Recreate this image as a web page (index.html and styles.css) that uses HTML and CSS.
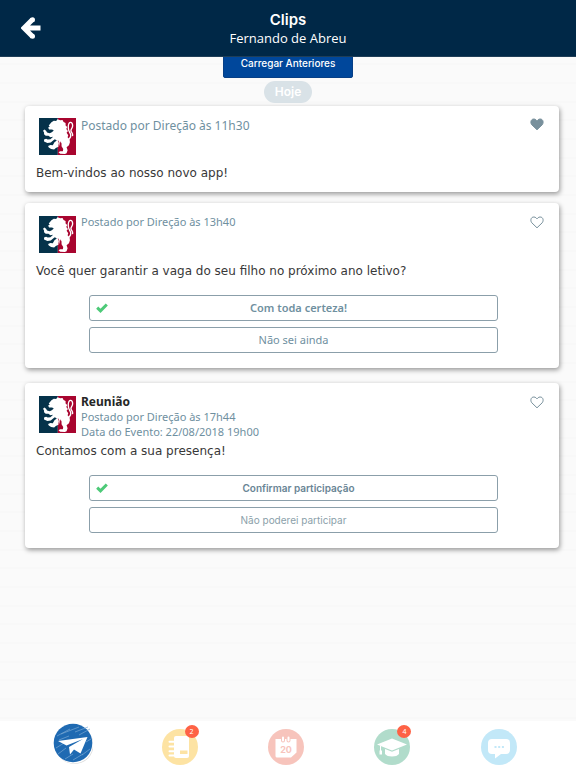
FILE: index.html
```html
<!DOCTYPE html>
<html lang="pt-BR">
<head>
<meta charset="utf-8">
<meta name="viewport" content="width=device-width, initial-scale=1">
<title>Clips</title>
<link rel="stylesheet" href="styles.css">
</head>
<body>
<svg class="defs" aria-hidden="true">
  <symbol id="crest" viewBox="0 0 110 110">
    <path fill="#05324a" d="M0 0h56v110H0z"/>
    <path fill="#a8052f" d="M56 0h54v110H56z"/>
    <path fill="#fff" d="M37 13l7-5 7 1 4-5 8 3 7-1 3 6 6 3 0 7 5 5-3 6 5 6-4 5 5 7-2 6 6 7 1 8-3 9-7 6 3 9-3 9-5 2-14-1-5-4 5-3 8 0 1-7-5-8 0-8-3-7-2 8-3 8-9 4-5 5-9-2-7-4-2-5 7-3 7 1 5-9 7-5-6-4-5 4-7 6-10 1-10-4 0-6 6-2 5 2 8-1 8-7-8 1-6-4-8 0-5-5 0-5-3-5 4-4 5 4 3 5 8 2 6-3 6-5-5-3-9 0-3-6 5-2-3-4z"/>
    <path fill="none" stroke="#fff" stroke-width="4" stroke-linecap="round" d="M85 66c7-5 12-12 8-20-3-6-6-9-6-18 0-8 2-14 6-15s7 4 7 10c0 8-6 9-5 15s6 7 5 14"/>
    <path fill="none" stroke="#a8052f" stroke-width="2" d="M57 67l3 8-2 8 5 8"/>
  </symbol>
  <symbol id="heart" viewBox="0 0 14 13">
    <path d="M7 11.8L1.9 6.9C.2 5.100.5 1 3.900 1 5.600 1 6.400 2.200 7 3c.6-.8 1.400-2 3.100-2 3.400 0 3.700 4.100 2 5.900z"/>
  </symbol>
  <symbol id="check" viewBox="0 0 12 10">
    <path fill="none" stroke="#4dca78" stroke-width="3" d="M1.200 4.600l3.300 3.200L10.800 1.500"/>
  </symbol>
</svg>

<header class="topbar">
  <button class="back" type="button" aria-label="Voltar">
    <svg viewBox="0 0 20 22" width="20" height="22"><path d="M19.500 11H4M11.500 2.500L3 11l8.500 8.500" fill="none" stroke="#fff" stroke-width="5"/><circle cx="11.500" cy="2.800" r="2.500" fill="#fff"/><circle cx="11.500" cy="19.200" r="2.500" fill="#fff"/></svg>
  </button>
  <div class="heading">
    <h1>Clips</h1>
    <p>Fernando de Abreu</p>
  </div>
</header>

<main class="feed">
  <button class="load" type="button">Carregar Anteriores</button>
  <span class="day">Hoje</span>

  <article class="card">
    <div class="card-head">
      <svg class="crest"><use href="#crest"/></svg>
      <div class="meta wide"><p>Postado por Direção às 11h30</p></div>
      <button class="like on" type="button" aria-label="Curtir"><svg width="14" height="13"><use href="#heart"/></svg></button>
    </div>
    <p class="message">Bem-vindos ao nosso novo app!</p>
  </article>

  <article class="card">
    <div class="card-head">
      <svg class="crest"><use href="#crest"/></svg>
      <div class="meta"><p>Postado por Direção às 13h40</p></div>
      <button class="like" type="button" aria-label="Curtir"><svg width="14" height="13"><use href="#heart"/></svg></button>
    </div>
    <p class="message">Você quer garantir a vaga do seu filho no próximo ano letivo?</p>
    <div class="options">
      <button class="option chosen" type="button"><svg class="tick" width="12" height="10"><use href="#check"/></svg>Com toda certeza!</button>
      <button class="option" type="button">Não sei ainda</button>
    </div>
  </article>

  <article class="card event">
    <div class="card-head">
      <svg class="crest"><use href="#crest"/></svg>
      <div class="meta"><h2>Reunião</h2><p>Postado por Direção às 17h44</p><p>Data do Evento: 22/08/2018 19h00</p></div>
      <button class="like" type="button" aria-label="Curtir"><svg width="14" height="13"><use href="#heart"/></svg></button>
    </div>
    <p class="message">Contamos com a sua presença!</p>
    <div class="options rsvp">
      <button class="option chosen" type="button"><svg class="tick" width="12" height="10"><use href="#check"/></svg>Confirmar participação</button>
      <button class="option" type="button">Não poderei participar</button>
    </div>
  </article>
</main>

<nav class="tabs">
  <a class="tab active" href="#clips" aria-label="Clips">
    <svg viewBox="0 0 40 42" width="40" height="42">
      <circle cx="21.500" cy="22" r="19" fill="#d8d8d8"/>
      <circle cx="21" cy="21.500" r="19" fill="#fff"/>
      <circle cx="20" cy="20" r="19.300" fill="#1f6ab2"/>
      <g stroke="#79a7d3" stroke-width=".7" fill="none"><path d="M4 13L17 6M8 11l18-7M3 25l8-5M5 31l8-6M22 9l13-5M26 12l11-6M29 32l8-6M12 36l8-5M20 37l10-6M33 19l5-3M6 17l10-4"/></g>
      <path fill="#fff" d="M34.500 14L5 18l8.500 4.500L30 16 16 24l1 7.500 4-5 6.500 4z"/>
    </svg>
  </a>
  <a class="tab" href="#agenda" aria-label="Agenda">
    <svg viewBox="0 0 36 36" width="36" height="36">
      <circle cx="18" cy="18" r="18" fill="#fde3a3"/>
      <path fill="#fff" d="M14 7h11q2 0 2 2v18q0 2-2 2H14q-2 0-2-2V9q0-2 2-2z"/>
      <path d="M7.500 12.800h5M7.500 17.500h5M7.500 22.200h5M7.500 26.500h5" stroke="#fff" stroke-width="2" stroke-linecap="round" fill="none"/>
      <path fill="#fde3a3" d="M18 21.500h7.500v3.500H18z"/>
    </svg>
    <span class="badge">2</span>
  </a>
  <a class="tab" href="#calendario" aria-label="Calendário">
    <svg viewBox="0 0 36 36" width="36" height="36">
      <circle cx="18" cy="18" r="18" fill="#f7c4bc"/>
      <path fill="#fff" d="M7.500 10h21v13.500L23 28.500H9q-1.500 0-1.500-1.500z"/>
      <path d="M15 8.500v3M20.500 8.500v3" stroke="#f7c4bc" stroke-width="4" stroke-linecap="round"/>
      <path d="M15 8.500v3M20.500 8.500v3" stroke="#fff" stroke-width="2" stroke-linecap="round"/>
      <text class="date" x="18" y="24" text-anchor="middle">20</text>
    </svg>
  </a>
  <a class="tab" href="#escola" aria-label="Escola">
    <svg viewBox="0 0 36 36" width="36" height="36">
      <circle cx="18" cy="18" r="18" fill="#b1dccb"/>
      <path fill="#fff" d="M18 9.500l15 6-15 6-15-6zM11 20l7 2.800 7-2.800v5q-2 2.500-7 2.500t-7-2.500z"/>
      <path d="M6.500 17v6" stroke="#fff"/><path fill="#fff" d="M5.500 21.500h2.500v4H5.500z"/>
    </svg>
    <span class="badge">4</span>
  </a>
  <a class="tab" href="#mensagens" aria-label="Mensagens">
    <svg viewBox="0 0 36 36" width="36" height="36">
      <circle cx="18" cy="18" r="18" fill="#c2e8f8"/>
      <path fill="#fff" d="M11 10h14q4 0 4 4v7q0 4-4 4h-5l-6 4.500V25h-3q-4 0-4-4v-7q0-4 4-4z"/>
      <path fill="#c2e8f8" d="M13.500 17h2v2h-2zM17.200 17h2v2h-2zM20.900 17h2v2h-2z"/>
    </svg>
  </a>
</nav>
</body>
</html>
```
FILE: styles.css
```css
* {
  box-sizing: border-box;
}

body {
  margin: 0;
  min-height: 100vh;
  display: flex;
  flex-direction: column;
  font-family: "Noto Sans", "Open Sans", sans-serif;
  color: #383838;
  background: #fafafa repeating-linear-gradient(#fafafa 0 7px, #f6f6f6 8px, #fafafa 9px 26px, #f6f6f6 27px, #fafafa 28px 45px, #f6f6f6 46px, #fafafa 47px 56px);
}

h1, h2, p {
  margin: 0;
}

button {
  font: inherit;
  cursor: pointer;
}

.defs {
  display: none;
}

.topbar {
  position: sticky;
  top: 0;
  z-index: 2;
  display: grid;
  grid-template-columns: 60px 1fr 60px;
  align-items: center;
  height: 57px;
  border-bottom: 1px solid #1f3e57;
  background: #002847;
  color: #fff;
  text-align: center;
}

.back {
  display: flex;
  width: 60px;
  padding: 0 0 0 21px;
  border: 0;
  background: none;
}

.heading {
  padding-top: 2px;
}

.heading h1 {
  font: 600 15px/18px Inter, sans-serif;
}

.heading p {
  font: 400 13px/18px "Open Sans", sans-serif;
}

.feed {
  flex: 1;
  display: flex;
  flex-direction: column;
  align-items: center;
  padding: 0 17px 20px 25px;
}

.load {
  height: 30px;
  margin-top: -9px;
  margin-right: 8px;
  padding: 0 17px;
  border: 1px solid #073f86;
  border-radius: 2px;
  background: #00479b;
  color: #fff;
  font: 500 10px/18px Inter, sans-serif;
}

.day {
  margin: 3px 8px 3px 0;
  padding: 0 11px;
  border-radius: 11px;
  background: #d9e2e7;
  color: #fff;
  font: 600 12px/22px Inter, sans-serif;
}

.card {
  width: 100%;
  margin-bottom: 11px;
  padding: 12px 11px 9px;
  border-radius: 4px;
  background: #fff;
  box-shadow: 1px 2px 5px rgba(0, 0, 0, 0.4);
}

.card:has(.options) {
  padding: 13px 11px 15px;
}

.event {
  margin-top: 4px;
}

.card-head {
  display: grid;
  grid-template-columns: 37px 1fr auto;
  column-gap: 5px;
  height: 37px;
  padding: 0 4px 0 3px;
}

.crest {
  width: 37px;
  height: 37px;
}

.meta {
  margin-top: -2px;
  color: #6f909f;
  font-size: 11px;
  line-height: 15px;
}

.wide {
  margin-top: 0;
  font-size: 12px;
}

.meta h2 {
  color: #262626;
  font-size: 12px;
  line-height: 15px;
}

.like {
  align-self: start;
  display: flex;
  padding: 0;
  border: 0;
  background: none;
  fill: none;
  stroke: #78909c;
}

.on {
  fill: #78909c;
}

.message {
  margin-top: 8px;
  font: 12px/20px "DejaVu Sans", sans-serif;
}

.options {
  display: grid;
  gap: 6px;
  margin: 14px 50px 0 53px;
}

.option {
  position: relative;
  height: 26px;
  padding: 0 12px;
  border: 1px solid #8b9faa;
  border-radius: 3px;
  background: #fff;
  color: #6f909f;
  font-size: 11px;
  line-height: 24px;
}

.chosen {
  padding-left: 22px;
  font-weight: 600;
}

.rsvp .option {
  color: #8b9faa;
  font-family: Inter, sans-serif;
  font-size: 10px;
}

.rsvp .chosen {
  color: #698595;
}

.tick {
  position: absolute;
  left: 6px;
  top: 7px;
}

.tabs {
  position: sticky;
  bottom: 0;
  display: grid;
  grid-template-columns: repeat(5, 1fr);
  height: 47px;
  padding: 0 24px 0 20px;
  background: #fff;
}

.tab {
  position: relative;
  justify-self: center;
  padding-top: 8px;
  text-decoration: none;
}

.active {
  padding-top: 2px;
}

.tab svg {
  display: block;
}

.date {
  fill: #f7c4bc;
  font: 700 9px Inter, sans-serif;
}

.badge {
  position: absolute;
  top: 4px;
  right: -1px;
  width: 14px;
  border-radius: 50%;
  background: #fe6245;
  color: #fff;
  font: 7px/13px "Noto Sans", sans-serif;
  text-align: center;
}
```
